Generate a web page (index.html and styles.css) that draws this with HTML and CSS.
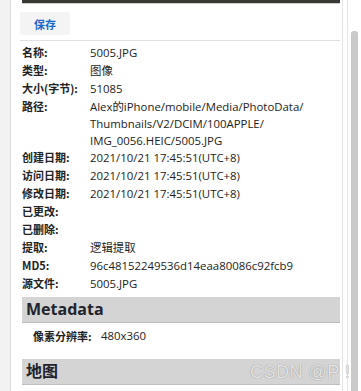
FILE: index.html
```html
<!DOCTYPE html>
<html lang="zh-CN">
<head>
    <meta charset="UTF-8">
    <title>文件详情</title>
    <link rel="stylesheet" href="styles.css">
</head>
<body>
<div class="frame">
    <div class="gutter"></div>
    <div class="panel">
        <div class="preview"></div>
        <div class="toolbar">
            <button class="save-btn">保存</button>
        </div>
        <table class="props">
            <tr><th>名称:</th><td>5005.JPG</td></tr>
            <tr><th>类型:</th><td>图像</td></tr>
            <tr><th>大小(字节):</th><td>51085</td></tr>
            <tr><th>路径:</th><td>Alex的iPhone/mobile/Media/PhotoData/<br>Thumbnails/V2/DCIM/100APPLE/<br>IMG_0056.HEIC/5005.JPG</td></tr>
            <tr><th>创建日期:</th><td>2021/10/21 17:45:51(UTC+8)</td></tr>
            <tr><th>访问日期:</th><td>2021/10/21 17:45:51(UTC+8)</td></tr>
            <tr><th>修改日期:</th><td>2021/10/21 17:45:51(UTC+8)</td></tr>
            <tr><th>已更改:</th><td></td></tr>
            <tr><th>已删除:</th><td></td></tr>
            <tr><th>提取:</th><td>逻辑提取</td></tr>
            <tr><th>MD5:</th><td>96c48152249536d14eaa80086c92fcb9</td></tr>
            <tr><th>源文件:</th><td>5005.JPG</td></tr>
        </table>

        <h3 class="section">Metadata</h3>
        <div class="meta-row">
            <span class="meta-label">像素分辨率:</span>
            <span class="meta-value">480x360</span>
        </div>

        <h3 class="section">地图</h3>
    </div>
    <div class="edge"></div>
    <div class="scrollbar"><div class="thumb"></div></div>
</div>
<div class="watermark">CSDN @P !</div>
</body>
</html>
```

FILE: styles.css
```css
body {
    margin: 0;
    font-family: "Open Sans", "Noto Sans CJK SC", sans-serif;
    font-size: 11.4px;
    color: #222;
    background: #fff;
    height: 391px;
    overflow: hidden;
    position: relative;
}
.frame {
    display: flex;
    height: 391px;
}
.gutter {
    width: 10px;
    background: #f2f2f2;
    border-right: 1px solid #dcdcdc;
}
.panel {
    width: 320px;
    padding: 0 2px 0 9px;
    border-right: 1px solid #e2e2e2;
}
.preview {
    height: 3px;
    margin-left: 2px;
    background: #3a3835;
    border-bottom: 1px solid #cfcfcf;
}
.toolbar {
    padding: 8px 0 5px;
    border-bottom: 1px solid #e0e0e0;
}
.save-btn {
    width: 50px;
    height: 23px;
    border: none;
    border-radius: 3px;
    background: #f4f4f4;
    color: #1a68cc;
    font-family: "Noto Sans CJK SC", sans-serif;
    font-weight: bold;
    font-size: 11px;
    cursor: pointer;
}
.props {
    border-collapse: collapse;
    margin: 3px 0 0 2px;
}
.props th, .props td {
    padding: 0;
    text-align: left;
    vertical-align: top;
    line-height: 17px;
    height: 18px;
}
.props th {
    width: 68px;
    font-family: "Noto Sans CJK SC", sans-serif;
    font-weight: bold;
    font-size: 11px;
    white-space: nowrap;
}
.section {
    margin: 4px 0 0 2px;
    height: 25px;
    line-height: 24px;
    padding-left: 4px;
    background: #d4d4d4;
    border-bottom: 1px solid #bdbdbd;
    font-family: "Open Sans", "Noto Sans CJK SC", sans-serif;
    font-size: 16px;
    font-weight: bold;
    color: #20232c;
}
.meta-row {
    display: flex;
    height: 32px;
    padding: 5px 0 0 13px;
    box-sizing: border-box;
}
.meta-label {
    width: 68px;
    font-family: "Noto Sans CJK SC", sans-serif;
    font-weight: bold;
    font-size: 11px;
}
.edge {
    width: 4px;
    border-right: 1px solid #e6e6e6;
}
.scrollbar {
    width: 12px;
    padding: 31px 0 0 3px;
    box-sizing: border-box;
}
.thumb {
    width: 7px;
    height: 360px;
    background: #c9c9c9;
    border-radius: 3px 3px 0 0;
}
.watermark {
    position: absolute;
    left: 250px;
    top: 362px;
    font-family: "Liberation Sans", sans-serif;
    font-size: 18px;
    color: #e4e4e4;
    text-shadow: 0 0 1px #777;
    letter-spacing: 0.5px;
}
```
